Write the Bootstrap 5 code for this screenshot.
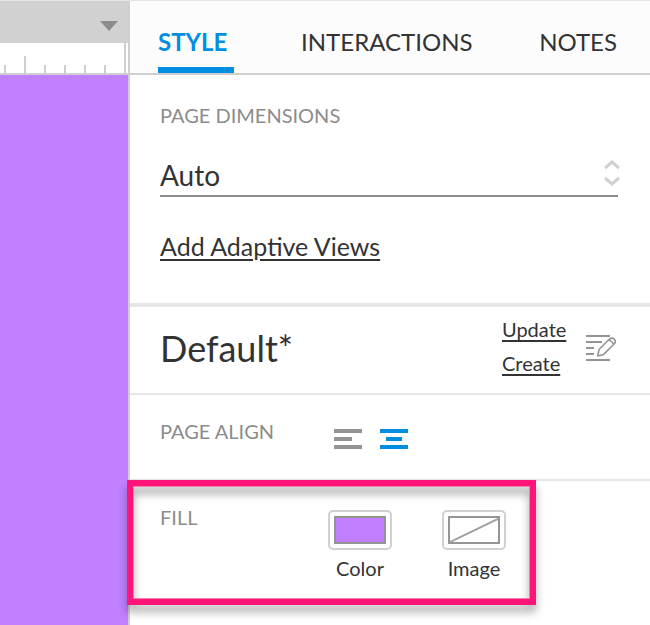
<!DOCTYPE html>
<html lang="en">
<head>
<meta charset="utf-8">
<meta name="viewport" content="width=device-width, initial-scale=1">
<title>Page style</title>
<link rel="stylesheet" href="https://cdn.jsdelivr.net/npm/bootstrap@5.3.0/dist/css/bootstrap.min.css">
<style>
  body { font-family: Lato, "Open Sans", sans-serif; font-size: 20px; line-height: 24px; color: #333; background: #fff; }
  a { color: #333; }
  a:hover { color: #008fe0; }
  .workspace { border-top: 1px solid #e5e5e5; }
  .canvas-side { width: 130px; border-right: 2px solid #cfcfcf; background: #c080ff; }
  .canvas-bar { height: 42px; background: #d1d1d1; padding-right: 10px; padding-top: 8px; }
  .ruler { height: 32px; background: #fff; border-bottom: 2px solid #cfcfcf; padding-right: 2px; }
  .ruler svg { display: block; }
  .tab-strip { background: #fcfcfc; border-bottom: 2px solid #cfcfcf; padding: 0 33px 0 28px; }
  .tab-strip .nav-link { font-size: 24px; line-height: 32px; color: #333; padding: 25px 0 9px; border: 0; border-bottom: 6px solid transparent; border-radius: 0; }
  .tab-strip .nav-link.active { color: #008fe0; font-weight: 700; border-color: #008fe0; padding-right: 7px; }
  .panel-section { padding-left: 30px; padding-right: 32px; border-bottom: 2px solid #e6e6e6; }
  .section-label { color: #8c8c8c; font-size: 20px; line-height: 24px; font-weight: 400; margin: 0; }
  .dimensions { padding-top: 28px; padding-bottom: 41px; border-bottom-width: 4px; }
  .size-field { margin-top: 28px; margin-bottom: 33px; }
  .size-field select { appearance: none; background: transparent; border: 0; border-bottom: 2px solid #8c8c8c; border-radius: 0; padding: 1px 0; font-size: 28px; line-height: 38px; color: #333; width: 100%; display: block; }
  .size-field svg { position: absolute; right: -2px; top: 4px; pointer-events: none; }
  .views-link { font-size: 25px; line-height: 32px; display: inline-block; text-underline-offset: 3px; }
  .style-row { padding-top: 5px; padding-bottom: 13px; }
  .style-name { font-size: 36px; line-height: 44px; font-weight: 400; margin: 0; padding-top: 3px; }
  .style-links { width: 84px; line-height: 34px; }
  .style-links a { text-underline-offset: 3px; }
  .edit-icon { margin-top: 4px; }
  .row-label { width: 168px; }
  .align-row { padding-top: 24px; padding-bottom: 26px; }
  .align-group { gap: 6px; padding-top: 6px; }
  .align-group label { padding: 4px 6px; border: 0; line-height: 0; color: #949494; }
  .align-group .btn-check:checked + label { color: #008fe0; }
  .fill-row { padding-top: 24px; padding-bottom: 24px; border-bottom: 0; }
  .fill-options { gap: 50px; padding-top: 5px; }
  .swatch-btn { width: 64px; background: none; border: 0; padding: 0; color: #333; }
  .swatch-frame { display: block; height: 40px; border: 2px solid #d0d0d0; border-radius: 5px; padding: 4px; background: #fff; margin-bottom: 6px; }
  .swatch { display: block; height: 28px; border: 2px solid #949494; }
  .swatch-color { background: #c080ff; }
  .swatch svg { display: block; width: 100%; height: 100%; }
  .callout-box { position: absolute; top: -1px; bottom: -1px; left: -3px; width: 409px; border: 6px solid #ff1479; outline: 1px solid #ef7fac; outline-offset: -7px; filter: drop-shadow(0 7px 4px rgba(0,0,0,.32)); pointer-events: none; }
</style>
</head>
<body>
<div class="workspace d-flex min-vh-100">
  <div class="canvas-side flex-shrink-0">
    <div class="canvas-bar d-flex align-items-center justify-content-end">
      <svg width="18" height="10" viewBox="0 0 18 10" aria-hidden="true"><path d="M0 0H18L9 10Z" fill="#8c8c8c"/></svg>
    </div>
    <div class="ruler d-flex justify-content-end">
      <svg width="126" height="30" viewBox="0 0 126 30" fill="#cfcfcf" aria-hidden="true">
        <path d="M4 22h2v8h-2zM24 13h2v17h-2zM44 22h2v8h-2zM64 22h2v8h-2zM84 22h2v8h-2zM104 22h2v8h-2zM124 0h2v30h-2z"/>
      </svg>
    </div>
  </div>

  <main class="flex-grow-1">
    <div class="tab-strip nav flex-nowrap justify-content-between" role="tablist">
      <button type="button" class="nav-link active bg-transparent" role="tab" aria-selected="true">STYLE</button>
      <button type="button" class="nav-link bg-transparent" role="tab" aria-selected="false">INTERACTIONS</button>
      <button type="button" class="nav-link bg-transparent" role="tab" aria-selected="false">NOTES</button>
    </div>

    <section class="panel-section dimensions">
      <label class="section-label d-block" for="page-size">PAGE DIMENSIONS</label>
      <div class="size-field position-relative">
        <select id="page-size"><option>Auto</option></select>
        <svg width="16" height="28" viewBox="0 0 16 28" fill="none" stroke="#d0d0d0" stroke-width="3.2" aria-hidden="true"><path d="M1 9L8 3L15 9M1 19L8 25L15 19"/></svg>
      </div>
      <a class="views-link" href="#">Add Adaptive Views</a>
    </section>

    <section class="panel-section style-row d-flex align-items-center">
      <h1 class="style-name flex-grow-1">Default*</h1>
      <div class="style-links d-flex flex-column align-items-start">
        <a href="#">Update</a>
        <a href="#">Create</a>
      </div>
      <button type="button" class="btn edit-icon p-0 border-0 lh-1" aria-label="Edit styles">
        <svg class="d-block" width="32" height="28" viewBox="0 0 32 28" fill="none" stroke="#949494" stroke-width="2" aria-hidden="true">
          <path d="M0 2H24M0 8H16M0 14H8M0 20H8M0 26H24"/>
          <path stroke-width="1.6" stroke-linejoin="round" d="M11.8 22L13 15.5L23.5 5Q26 3 28.3 5.2Q30.4 7.5 28.3 9.8L17.7 20.4ZM22.8 5.8Q26 7 27.6 10.4"/>
        </svg>
      </button>
    </section>

    <section class="panel-section align-row d-flex align-items-start">
      <h2 class="section-label row-label">PAGE ALIGN</h2>
      <div class="align-group d-flex" role="radiogroup" aria-label="Page align">
        <input class="btn-check" type="radio" name="page-align" id="align-left">
        <label for="align-left" class="btn" aria-label="Left"><svg width="28" height="20" viewBox="0 0 28 20" fill="currentColor"><path d="M0 0h28v4H0zM0 8h18v4H0zM0 16h28v4H0z"/></svg></label>
        <input class="btn-check" type="radio" name="page-align" id="align-center" checked>
        <label for="align-center" class="btn" aria-label="Center"><svg width="28" height="20" viewBox="0 0 28 20" fill="currentColor"><path d="M0 0h28v4H0zM6 8h16v4H6zM0 16h28v4H0z"/></svg></label>
      </div>
    </section>

    <section class="panel-section fill-row position-relative d-flex align-items-start">
      <h2 class="section-label row-label">FILL</h2>
      <div class="fill-options d-flex">
        <button type="button" class="swatch-btn"><span class="swatch-frame"><span class="swatch swatch-color"></span></span>Color</button>
        <button type="button" class="swatch-btn"><span class="swatch-frame"><span class="swatch"><svg viewBox="0 0 48 24" preserveAspectRatio="none" stroke="#a0a0a0" stroke-width="2" aria-hidden="true"><path d="M0 24L48 1"/></svg></span></span>Image</button>
      </div>
      <div class="callout-box"></div>
    </section>
  </main>
</div>
<script src="https://cdn.jsdelivr.net/npm/bootstrap@5.3.0/dist/js/bootstrap.bundle.min.js"></script>
</body>
</html>
